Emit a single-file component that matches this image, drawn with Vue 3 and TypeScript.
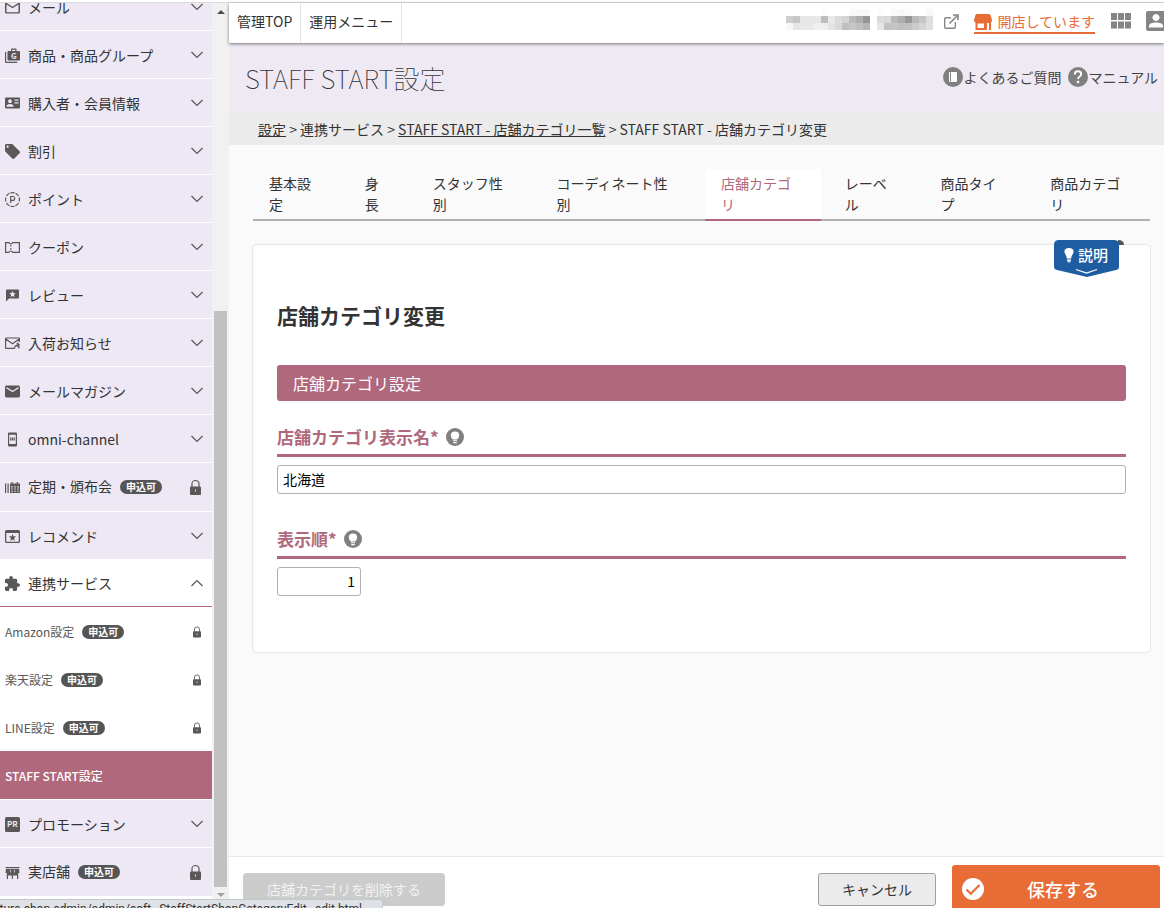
<script setup lang="ts">
import { ref } from 'vue'

interface Icon {
  box: string
  solid?: string
  line?: string
  glyph?: { t: string; x: number; y: number; size: number; light?: boolean }
}
interface MenuItem {
  label: string
  icon: Icon
  state: 'closed' | 'open' | 'locked'
}
interface SubItem {
  label: string
  locked: boolean
  active: boolean
}

const menuTop: MenuItem[] = [
  {
    label: 'メール',
    state: 'closed',
    icon: {
      box: '2 2 20 20',
      solid:
        'M20 4H4c-1.1 0-2 .9-2 2v12c0 1.1.9 2 2 2h16c1.1 0 2-.9 2-2V6c0-1.1-.9-2-2-2zm0 14.4H4V8l8 5 8-5v10.4zm-8-7.400L4 5.800h16l-8 5.200z',
    },
  },
  {
    label: '商品・商品グループ',
    state: 'closed',
    icon: {
      box: '0 0 15 15',
      solid: 'M0 4h1.200v9.800h11V15H1.200Q0 15 0 13.800zM3.500 3H6V1.500Q6 .5 7 .5h3.500q1 0 1 1V3H14q1 0 1 1v7.500q0 1-1 1H3.500q-1 0-1-1V4q0-1 1-1zM7.200 1.700V3h3.100V1.700z',
      glyph: { t: 'G', x: 6, y: 11, size: 8, light: true },
    },
  },
  {
    label: '購入者・会員情報',
    state: 'closed',
    icon: {
      box: '0 0 15 15',
      solid:
        'M1 1.500h13q1 0 1 1v9q0 1-1 1H1q-1 0-1-1v-9q0-1 1-1zM5 3.300a1.900 1.900 0 1 0 .01 0zM1.400 10.800h7.200v-.8Q8 8 5 8T1.400 10zM9.500 3.500v1.300h4V3.500zM9.500 6.300v1.300h4V6.300z',
    },
  },
  {
    label: '割引',
    state: 'closed',
    icon: {
      box: '2 2 20 20',
      solid:
        'M21.410 11.580l-9-9C12.050 2.220 11.550 2 11 2H4c-1.100 0-2 .9-2 2v7c0 .55.22 1.050.59 1.420l9 9c.36.36.86.58 1.410.58.55 0 1.050-.22 1.410-.59l7-7c.37-.36.59-.86.59-1.410 0-.55-.23-1.060-.59-1.420zM5.500 7C4.670 7 4 6.330 4 5.500S4.670 4 5.500 4 7 4.670 7 5.500 6.330 7 5.500 7z',
    },
  },
  {
    label: 'ポイント',
    state: 'closed',
    icon: {
      box: '0 0 15 15',
      line: 'M5.500.9A7 7 0 0 1 9.500.9M10.500 1.200A7 7 0 0 1 13.500 4M14.200 5.500a7 7 0 0 1 0 4M13.500 11a7 7 0 0 1-3 2.800M9.500 14.200a7 7 0 0 1-4 0M4.500 13.800A7 7 0 0 1 1.500 11M.8 9.500a7 7 0 0 1 0-4M1.500 4A7 7 0 0 1 4.500 1.200M5.700 11V4.500h2.300q1.800 0 1.800 1.900T8 8.300H5.700',
    },
  },
  {
    label: 'クーポン',
    state: 'closed',
    icon: {
      box: '0 0 15 15',
      line: 'M.6 2.600h3.200q.7 1.400 2 1.400t2-1.400h6.600v9.800H7.800q-.7-1.400-2-1.400t-2 1.400H.6zM5.800 5v1.500M5.800 8v1.500',
    },
  },
  {
    label: 'レビュー',
    state: 'closed',
    icon: {
      box: '0 0 15 15',
      solid:
        'M2 1.500h11q1 0 1 1v7q0 1-1 1H4L1 13.500v-11q0-1 1-1zM7.500 2.900l-.9 2.200-2.300.2 1.800 1.500-.6 2.300 2-1.200 2 1.200-.6-2.300 1.800-1.500-2.300-.2z',
    },
  },
  {
    label: '入荷お知らせ',
    state: 'closed',
    icon: {
      box: '0 0 15 15',
      line: 'M9 12.400H1.200q-.6 0-.6-.6V2.600q0-.6.6-.6h12.600q.6 0 .6.6V6M.8 3l6.700 4.700L14.200 3M9.500 12.800q0-4 4-4M11.800 6.800l2.400 2-2.400 2M13.900 10v2.400',
    },
  },
  {
    label: 'メールマガジン',
    state: 'closed',
    icon: {
      box: '2 2 20 20',
      solid:
        'M20 4H4c-1.100 0-2 .9-2 2v12c0 1.100.9 2 2 2h16c1.100 0 2-.9 2-2V6c0-1.100-.9-2-2-2zm0 4l-8 5-8-5V6l8 5 8-5v2z',
    },
  },
  {
    label: 'omni-channel',
    state: 'closed',
    icon: {
      box: '0 0 15 15',
      solid:
        'M4 .5h7q1 0 1 1v12q0 1-1 1H4q-1 0-1-1v-12q0-1 1-1zM4.200 2.800v9.200h6.600V2.800zM5.200 5.500h1v3h-1zM6.700 5.500h1.600v3H6.700zM8.800 5.500h1v3h-1z',
    },
  },
  {
    label: '定期・頒布会',
    state: 'locked',
    icon: {
      box: '0 0 15 15',
      solid:
        'M0 3.500h1.200v9.500H0zM2.500 3.500h1.200v9.500H2.500zM5 3.500h1.500V2h1.200v1.500h4V2h1.200v1.500H15V13H5zM6.200 6.300v1.200h1.600V6.300zM9.200 6.300v1.200h1.600V6.300zM12.200 6.300v1.200h1.600V6.300zM6.200 8.500v1h1.600v-1zM9.200 8.500v1h1.600v-1zM12.200 8.500v1h1.600v-1zM6.200 10.700v1h1.600v-1zM9.200 10.700v1h1.600v-1zM12.200 10.700v1h1.600v-1z',
    },
  },
  {
    label: 'レコメンド',
    state: 'closed',
    icon: {
      box: '0 0 15 15',
      solid:
        'M1.500 1h12q1.500 0 1.500 1.500v10q0 1.500-1.500 1.500h-12Q0 14 0 12.500v-10Q0 1 1.500 1zM1.300 4v8.700h12.400V4zM7.500 4.900l1 2.400 2.600.2-2 1.700.7 2.600-2.300-1.400-2.300 1.400.7-2.600-2-1.700 2.600-.2z',
    },
  },
  {
    label: '連携サービス',
    state: 'open',
    icon: {
      box: '2 1 21 21',
      solid:
        'M20.500 11H19V7c0-1.100-.9-2-2-2h-4V3.500C13 2.120 11.880 1 10.500 1S8 2.120 8 3.500V5H4c-1.100 0-2 .9-2 2v3.800h1.500c1.490 0 2.700 1.210 2.700 2.700s-1.210 2.700-2.700 2.700H2V20c0 1.100.9 2 2 2h3.800v-1.500c0-1.490 1.210-2.700 2.700-2.700s2.700 1.210 2.700 2.700V22H17c1.100 0 2-.9 2-2v-4h1.500c1.380 0 2.500-1.120 2.500-2.500S21.880 11 20.500 11z',
    },
  },
]

const subItems: SubItem[] = [
  { label: 'Amazon設定', locked: true, active: false },
  { label: '楽天設定', locked: true, active: false },
  { label: 'LINE設定', locked: true, active: false },
  { label: 'STAFF START設定', locked: false, active: true },
]

const menuBottom: MenuItem[] = [
  {
    label: 'プロモーション',
    state: 'closed',
    icon: {
      box: '0 0 15 15',
      solid: 'M1.500 0h12Q15 0 15 1.500v12q0 1.500-1.500 1.500h-12Q0 15 0 13.500v-12Q0 0 1.500 0z',
      glyph: { t: 'PR', x: 2, y: 10, size: 8, light: true },
    },
  },
  {
    label: '実店舗',
    state: 'locked',
    icon: {
      box: '0 0 15 15',
      solid:
        'M.5 2h14v1.200H.5zM1 4h13l.5 4h-1.300v6H12V10.500H3V14H1.800V8H.5zM5 4.800v2.700h.7V4.800zM9.300 4.800v2.700h.7V4.800zM6.800 10.500H8V14H6.800z',
    },
  },
]

const tabs = ['基本設定', '身長', 'スタッフ性別', 'コーディネート性別', '店舗カテゴリ', 'レーベル', '商品タイプ', '商品カテゴリ']
const activeTab = ref('店舗カテゴリ')

const categoryName = ref('北海道')
const displayOrder = ref('1')

const cell = 7
const maskRows: string[][] = [
  ['', '', '', '', '', '#fbfbfb', '', '', '', '#fafafa', '#f8f8f8', '#f8f8f8', '', '#fbfbfb', '', '#fafafa', '#f8f8f8', '#fbfbfb', '#fdfdfd', '', '#f8f8f8'],
  ['#cecece', '#c6c6c6', '#e6e6e6', '#e7e7e7', '#e8e8e8', '#bdbdbd', '#e9e9e9', '#dcdcdc', '#d5d5d5', '#bababa', '#adadad', '#959595', '', '#dadada', '#d8d8d8', '#bababa', '#adadad', '#979797', '#b9b9b9', '#c6c6c6', '#dedede'],
  ['#f8f8f8', '#e5e5e5', '#e9e9e9', '#e8e8e8', '#efefef', '#efefef', '#e4e4e4', '#dadada', '#c0c0c0', '#c6c6c6', '#c0c0c0', '#b5b5b5', '', '#e6e6e6', '#c2c2c2', '#c5c5c5', '#bfbfbf', '#c2c2c2', '#cbcbcb', '#d5d5d5', '#e0e0e0'],
]
const maskCells = maskRows.flatMap((row, r) =>
  row.map((fill, c) => ({ fill, x: c * cell, y: r * cell })).filter((m) => m.fill),
)
</script>

<template>
  <div class="app">
    <div class="body">
      <nav class="sidebar" aria-label="メインメニュー">
        <div class="menu">
          <button
            v-for="item in menuTop"
            :key="item.label"
            type="button"
            class="item"
            :class="item.state"
          >
            <svg class="icon" :viewBox="item.icon.box" aria-hidden="true">
              <path v-if="item.icon.solid" :d="item.icon.solid" class="solid" />
              <path v-if="item.icon.line" :d="item.icon.line" class="line" />
              <text
                v-if="item.icon.glyph"
                :x="item.icon.glyph.x"
                :y="item.icon.glyph.y"
                :font-size="item.icon.glyph.size"
                class="glyph-light"
              >{{ item.icon.glyph.t }}</text>
            </svg>
            <span class="text">{{ item.label }}</span>
            <span v-if="item.state === 'locked'" class="badge">申込可</span>
            <svg v-if="item.state === 'locked'" class="lock" viewBox="0 0 11 15" aria-hidden="true">
              <path d="M2 7V3.500a3.500 3 0 0 1 7 0V7" class="line" />
              <path d="M1 6.500h9q1 0 1 1V14q0 1-1 1H1q-1 0-1-1V7.500q0-1 1-1zM5 9.500v2h1v-2z" class="solid" />
            </svg>
            <svg v-else class="chevron" viewBox="0 0 12 8" aria-hidden="true">
              <path :d="item.state === 'open' ? 'M.5 7 6 1.500 11.500 7' : 'M.5 1 6 6.500 11.500 1'" class="line" />
            </svg>
          </button>

          <a
            v-for="sub in subItems"
            :key="sub.label"
            href="#"
            class="sub"
            :class="{ active: sub.active }"
          >
            <span>{{ sub.label }}</span>
            <span v-if="sub.locked" class="badge">申込可</span>
            <svg v-if="sub.locked" class="lock small" viewBox="0 0 11 15" aria-hidden="true">
              <path d="M2 7V3.500a3.500 3 0 0 1 7 0V7" class="line" />
              <path d="M1 6.500h9q1 0 1 1V14q0 1-1 1H1q-1 0-1-1V7.500q0-1 1-1zM5 9.500v2h1v-2z" class="solid" />
            </svg>
          </a>

          <button
            v-for="item in menuBottom"
            :key="item.label"
            type="button"
            class="item"
            :class="item.state"
          >
            <svg class="icon" :viewBox="item.icon.box" aria-hidden="true">
              <path :d="item.icon.solid" class="solid" />
              <text
                v-if="item.icon.glyph"
                :x="item.icon.glyph.x"
                :y="item.icon.glyph.y"
                :font-size="item.icon.glyph.size"
                class="glyph-light"
              >{{ item.icon.glyph.t }}</text>
            </svg>
            <span class="text">{{ item.label }}</span>
            <span v-if="item.state === 'locked'" class="badge">申込可</span>
            <svg v-if="item.state === 'locked'" class="lock" viewBox="0 0 11 15" aria-hidden="true">
              <path d="M2 7V3.500a3.500 3 0 0 1 7 0V7" class="line" />
              <path d="M1 6.500h9q1 0 1 1V14q0 1-1 1H1q-1 0-1-1V7.500q0-1 1-1zM5 9.500v2h1v-2z" class="solid" />
            </svg>
            <svg v-else class="chevron" viewBox="0 0 12 8" aria-hidden="true">
              <path d="M.5 1 6 6.500 11.500 1" class="line" />
            </svg>
          </button>
        </div>
      </nav>

      <div class="scroll" aria-hidden="true">
        <svg class="arrow" viewBox="0 0 8 4"><path d="M0 4 4 0l4 4z" fill="#4d4d4d" /></svg>
        <div class="track"><div class="thumb"></div></div>
        <svg class="arrow" viewBox="0 0 8 4"><path d="M0 0l4 4 4-4z" fill="#a0a0a0" /></svg>
      </div>

      <div class="main">
        <header class="topbar">
          <a href="#" class="toplink">管理TOP</a>
          <a href="#" class="toplink">運用メニュー</a>
          <div class="tools">
            <svg class="mask" viewBox="0 0 147 21" shape-rendering="crispEdges" aria-hidden="true">
              <rect v-for="m in maskCells" :key="m.x + '-' + m.y" :x="m.x" :y="m.y" width="7" height="7" :fill="m.fill" />
            </svg>
            <svg class="ext" viewBox="0 0 15 15" aria-hidden="true">
              <path d="M7 3.700H1.700q-1 0-1 1v8.500q0 1 1 1h8.600q1 0 1-1V8" fill="none" stroke="#858585" stroke-width="1.400" />
              <path d="M5.500 9.500 13 2M9 1h5v5" fill="none" stroke="#858585" stroke-width="1.600" />
            </svg>
            <a href="#" class="shop">
              <svg viewBox="0 0 18 17" aria-hidden="true">
                <path
                  fill-rule="evenodd"
                  d="M3 0h12q1.200 0 1.600 1.300L18 6q0 2-1 2.500V16h-2V9h-2v7H1.500V8.500Q0 8 0 6l1.400-4.700Q1.800 0 3 0zM3.500 9.500V14H10V9.500z"
                  fill="#e76c35"
                />
              </svg>
              <span>開店しています</span>
            </a>
            <button type="button" class="plain grid-button" aria-label="アプリ一覧">
              <svg viewBox="0 0 20 16" aria-hidden="true">
                <path d="M0 0h6v7H0zM7 0h6v7H7zM14 0h6v7h-6zM0 8.500h6v7H0zM7 8.500h6v7H7zM14 8.500h6v7h-6z" fill="#858585" />
              </svg>
            </button>
            <button type="button" class="plain user-button" aria-label="アカウント">
              <svg viewBox="0 0 20 20" aria-hidden="true">
                <path
                  fill-rule="evenodd"
                  d="M2 0h16q2 0 2 2v16q0 2-2 2H2q-2 0-2-2V2q0-2 2-2zM10 3a3.500 3.500 0 1 0 .01 0zM3 16.500h14V15q0-3.500-7-3.500T3 15z"
                  fill="#858585"
                />
              </svg>
            </button>
          </div>
        </header>

        <div class="pagehead">
          <h1>STAFF START設定</h1>
          <div class="help">
            <a href="#">
              <svg viewBox="0 0 20 20" aria-hidden="true">
                <circle cx="10" cy="10" r="10" fill="#808080" />
                <rect x="6" y="5" width="8" height="10" rx="1" fill="#fff" />
                <path d="M7.500 5.500v9" stroke="#808080" />
              </svg>
              <span>よくあるご質問</span>
            </a>
            <a href="#">
              <svg viewBox="0 0 20 20" aria-hidden="true">
                <circle cx="10" cy="10" r="10" fill="#808080" />
                <path d="M6.800 7.500q0-3.200 3.200-3.200t3.200 2.700q0 1.500-1.500 2.500t-1.700 2.500" fill="none" stroke="#fff" stroke-width="1.900" />
                <circle cx="10" cy="15" r="1.300" fill="#fff" />
              </svg>
              <span>マニュアル</span>
            </a>
          </div>
        </div>

        <nav class="crumbs" aria-label="パンくず">
          <a href="#">設定</a> &gt; 連携サービス &gt; <a href="#">STAFF START - 店舗カテゴリ一覧</a> &gt; STAFF START - 店舗カテゴリ変更
        </nav>

        <main class="content">
          <nav class="tabs" aria-label="設定タブ">
            <a
              v-for="t in tabs"
              :key="t"
              href="#"
              class="tab"
              :class="{ current: t === activeTab }"
              @click.prevent="activeTab = t"
            >{{ t }}</a>
          </nav>

          <section class="card">
            <button type="button" class="explain">
              <svg class="explain-shape" viewBox="0 0 70 37" aria-hidden="true">
                <path d="M64 0q6 0 6 5h-6z" fill="#555" />
                <path d="M5 0h55q5 0 5 5v22q0 2-2 2.700L33 37 2 29.700Q0 29 0 27V5q0-5 5-5z" fill="#1f5da3" />
                <path d="M12.800 18.500q0-2-1.200-3.800-1.200-1.700-1.200-3.100Q10.400 8 15 8t4.600 3.600q0 1.400-1.200 3.100-1.200 1.800-1.200 3.800z" fill="#fff" />
                <path d="M13 19.200h4v2.300h-1v1h-2v-1h-1z" fill="#dfe7f1" />
                <path d="m22 29.500 10.500 3.500L43 29.500" fill="none" stroke="#fff" stroke-width="1.300" />
              </svg>
              <span>説明</span>
            </button>

            <h2>店舗カテゴリ変更</h2>
            <h3>店舗カテゴリ設定</h3>

            <div class="field">
              <div class="label">
                <label for="category-name">店舗カテゴリ表示名*</label>
                <svg viewBox="0 0 18 18" aria-hidden="true">
                  <circle cx="9" cy="9" r="9" fill="#808080" />
                  <path d="M7 11.500Q4.800 9.700 4.800 7.300 4.800 3.500 9 3.500t4.200 3.800q0 2.400-2.200 4.200zM7 12.300h4v1H7zM7.300 14h3.400v1.300H7.300z" fill="#fff" />
                </svg>
              </div>
              <input id="category-name" v-model="categoryName" type="text" />
            </div>

            <div class="field">
              <div class="label">
                <label for="display-order">表示順*</label>
                <svg viewBox="0 0 18 18" aria-hidden="true">
                  <circle cx="9" cy="9" r="9" fill="#808080" />
                  <path d="M7 11.500Q4.800 9.700 4.800 7.300 4.800 3.500 9 3.500t4.200 3.800q0 2.400-2.200 4.200zM7 12.300h4v1H7zM7.300 14h3.400v1.300H7.300z" fill="#fff" />
                </svg>
              </div>
              <input id="display-order" v-model="displayOrder" type="text" class="order" />
            </div>
          </section>
        </main>

        <footer class="actions">
          <button type="button" class="delete">店舗カテゴリを削除する</button>
          <button type="button" class="cancel">キャンセル</button>
          <button type="button" class="save">
            <svg viewBox="0 0 22 22" aria-hidden="true">
              <circle cx="11" cy="11" r="11" fill="#fff" />
              <path d="m4.500 11.500 4.300 4.300L17.500 7" fill="none" stroke="#e76c35" stroke-width="2.200" />
            </svg>
            <span>保存する</span>
          </button>
        </footer>
      </div>
    </div>
    <div class="status">project.future-shop.admin/admin/soft~StaffStartShopCategoryEdit~edit.html</div>
  </div>
</template>

<style>
html,
body {
  margin: 0;
  overflow: hidden;
}
</style>

<style scoped>
.app,
.app * {
  box-sizing: border-box;
}
.app {
  display: flex;
  flex-direction: column;
  height: 100vh;
  padding-top: 2px;
  overflow: hidden;
  background: #fff;
  color: #333;
  font-family: 'Noto Sans CJK JP', 'Noto Sans', sans-serif;
  font-size: 14px;
  line-height: 20px;
}
button,
input {
  margin: 0;
  font: inherit;
}
a {
  color: inherit;
  text-decoration: none;
}
svg {
  display: block;
  flex: none;
  overflow: visible;
}
.body {
  display: flex;
  flex: 1;
  min-height: 0;
  border-top: 1px solid #d9dbdf;
}

/* sidebar */
.sidebar {
  flex: none;
  width: 212px;
  overflow: hidden;
}
.menu {
  display: flex;
  flex-direction: column;
  margin-top: -20px;
}
.item {
  display: flex;
  align-items: center;
  width: 100%;
  height: 48px;
  padding: 0 9px 0 5px;
  border: 0;
  border-bottom: 1px solid #fff;
  background: #ede8f3;
  color: #333;
  text-align: left;
}
.item.locked {
  height: 49px;
}
.item.locked .text {
  padding-bottom: 2px;
}
.item.open {
  height: 47px;
  border-bottom-color: #b0687c;
  background: #fff;
}
.icon {
  width: 15px;
  height: 15px;
  margin-top: 1px;
  margin-right: 8px;
}
.solid {
  fill: #595757;
  fill-rule: evenodd;
}
.line {
  fill: none;
  stroke: #595757;
  stroke-width: 1.200;
}
.glyph-light {
  fill: #ede8f3;
  font-weight: 700;
}
.chevron {
  width: 12px;
  height: 8px;
  margin-left: auto;
}
.badge {
  height: 14px;
  margin-left: 8px;
  padding: 0 6px;
  border-radius: 7px;
  background: #555;
  color: #fff;
  font-size: 10px;
  font-weight: 700;
  line-height: 14px;
}
.lock {
  width: 11px;
  height: 15px;
  margin-left: auto;
  margin-right: 2px;
}
.lock.small {
  width: 8px;
  height: 12px;
  margin-right: 3px;
}
.sub {
  display: flex;
  align-items: center;
  height: 48px;
  padding: 1px 8px 0 5px;
  color: #595757;
  font-size: 12px;
}
.sub.active {
  height: 49px;
  border-bottom: 1px solid #fff;
  background: #b0687c;
  color: #fff;
  font-weight: 500;
}

/* scroll strip */
.scroll {
  display: flex;
  flex: none;
  flex-direction: column;
  align-items: center;
  width: 17px;
  padding: 7px 0 11px;
  background: #f1f1f1;
}
.arrow {
  width: 8px;
  height: 4px;
}
.track {
  display: flex;
  flex: 1;
  flex-direction: column;
  justify-content: flex-end;
  padding-bottom: 6px;
}
.thumb {
  width: 13px;
  height: 66%;
  background: #c1c1c1;
}

/* main column */
.main {
  display: flex;
  flex: 1;
  flex-direction: column;
  min-width: 0;
  background: #fafafa;
}
.topbar {
  position: relative;
  z-index: 1;
  display: flex;
  flex: none;
  height: 40px;
  background: #fff;
  box-shadow: 0 1px 3px rgba(0, 0, 0, 0.5);
}
.toplink {
  padding: 8px 8px 0;
  border-right: 1px solid #e4e4e4;
}
.tools {
  display: flex;
  align-items: center;
  margin-left: auto;
  padding-bottom: 4px;
}
.mask {
  width: 147px;
  height: 21px;
  margin-bottom: 3px;
}
.ext {
  width: 15px;
  height: 15px;
  margin: 0 15px 0 11px;
}
.shop {
  display: flex;
  align-items: center;
  gap: 5px;
  height: 22px;
  margin-top: 4px;
  border-bottom: 2px solid #e76c35;
  color: #e76c35;
}
.shop svg {
  width: 18px;
  height: 17px;
}
.shop span {
  padding-bottom: 2px;
}
.plain {
  flex: none;
  padding: 0;
  border: 0;
  background: none;
}
.grid-button {
  margin-left: 16px;
}
.grid-button svg {
  width: 20px;
  height: 16px;
}
.user-button {
  width: 18px;
  margin-left: 15px;
}
.user-button svg {
  width: 20px;
  height: 20px;
}
.pagehead {
  display: flex;
  flex: none;
  align-items: center;
  justify-content: space-between;
  height: 70px;
  padding: 0 6px 0 16px;
  background: #eee9f3;
}
h1,
h2,
h3 {
  margin: 0;
}
h1 {
  font-size: 26px;
  font-weight: 100;
  line-height: 36px;
}
.help {
  display: flex;
  gap: 7px;
  padding-bottom: 2px;
  color: #444;
}
.help a {
  display: flex;
  align-items: center;
}
.help svg {
  width: 20px;
  height: 20px;
}
.crumbs {
  flex: none;
  padding: 6px 29px;
  background: #ebebeb;
}
.crumbs a {
  text-decoration: underline;
}
.content {
  flex: 1;
  min-height: 0;
  padding: 24px 14px 0 24px;
}
.tabs {
  display: flex;
  gap: 8px;
  border-bottom: 2px solid #b0b0b0;
}
.tab {
  margin-bottom: -2px;
  padding: 4px 16px;
  border-bottom: 2px solid transparent;
  line-height: 21px;
}
.tab.current {
  border-bottom-color: #b0687c;
  background: #fff;
  color: #b0687c;
}
.card {
  position: relative;
  margin-top: 24px;
  padding: 54px 24px 56px;
  border-radius: 4px;
  background: #fff;
  box-shadow: 0 0 2px rgba(0, 0, 0, 0.25);
}
.explain {
  position: absolute;
  top: -5px;
  right: 26px;
  width: 70px;
  height: 37px;
  padding: 0;
  border: 0;
  background: none;
  color: #fff;
}
.explain-shape {
  width: 70px;
  height: 37px;
}
.explain span {
  position: absolute;
  top: 5px;
  left: 24px;
  font-size: 15px;
  font-weight: 500;
}
h2 {
  font-size: 21px;
  font-weight: 700;
  line-height: 32px;
}
h3 {
  margin: 34px 0 20px;
  padding: 6px 16px;
  border-radius: 3px;
  background: #b0687c;
  color: #fff;
  font-size: 16px;
  font-weight: 400;
  line-height: 24px;
}
.field + .field {
  margin-top: 29px;
}
.label {
  display: flex;
  align-items: center;
  gap: 7px;
  height: 36px;
  margin-bottom: 8px;
  padding-bottom: 2px;
  border-bottom: 3px solid #b0687c;
  color: #b0687c;
  font-size: 17px;
  font-weight: 700;
}
.label svg {
  width: 18px;
  height: 18px;
}
.field input {
  display: block;
  width: 100%;
  height: 29px;
  padding: 0 5px 2px;
  border: 1px solid #b0b0b0;
  border-radius: 3px;
  background: #fff;
  color: #000;
}
.field .order {
  width: 84px;
  text-align: right;
}

/* bottom bar */
.actions {
  display: flex;
  flex: none;
  align-items: flex-start;
  height: 52px;
  padding: 8px 4px 0 14px;
  border-top: 1px solid #e8e8e8;
  background: #fff;
}
.delete,
.cancel {
  height: 33px;
  margin-top: 8px;
  padding: 0 23px 2px;
  border: 1px solid #ccc;
  border-radius: 3px;
  background: #ccc;
  color: #f2f2f2;
}
.cancel {
  margin-left: auto;
  border-color: #a0a0a0;
  background: #ebebeb;
  color: #333;
}
.save {
  display: flex;
  flex: none;
  align-items: center;
  width: 208px;
  height: 48px;
  margin-left: 16px;
  padding: 0 18px 0 10px;
  border: 0;
  border-radius: 3px;
  background: #e76c35;
  color: #fff;
}
.save svg {
  width: 22px;
  height: 22px;
}
.save span {
  flex: 1;
  font-size: 18px;
  font-weight: 500;
  text-align: center;
}

/* link address bubble lying over the page */
.status {
  position: absolute;
  bottom: 0;
  left: 0;
  z-index: 2;
  display: flex;
  justify-content: flex-end;
  width: 383px;
  height: 9px;
  padding-right: 20px;
  overflow: hidden;
  border-top: 1px solid #c4c6ca;
  border-right: 1px solid #c4c6ca;
  border-radius: 0 4px 0 0;
  background: #dee1e6;
  font-family: Roboto, sans-serif;
  font-size: 12px;
  line-height: 18px;
  white-space: nowrap;
}
</style>
